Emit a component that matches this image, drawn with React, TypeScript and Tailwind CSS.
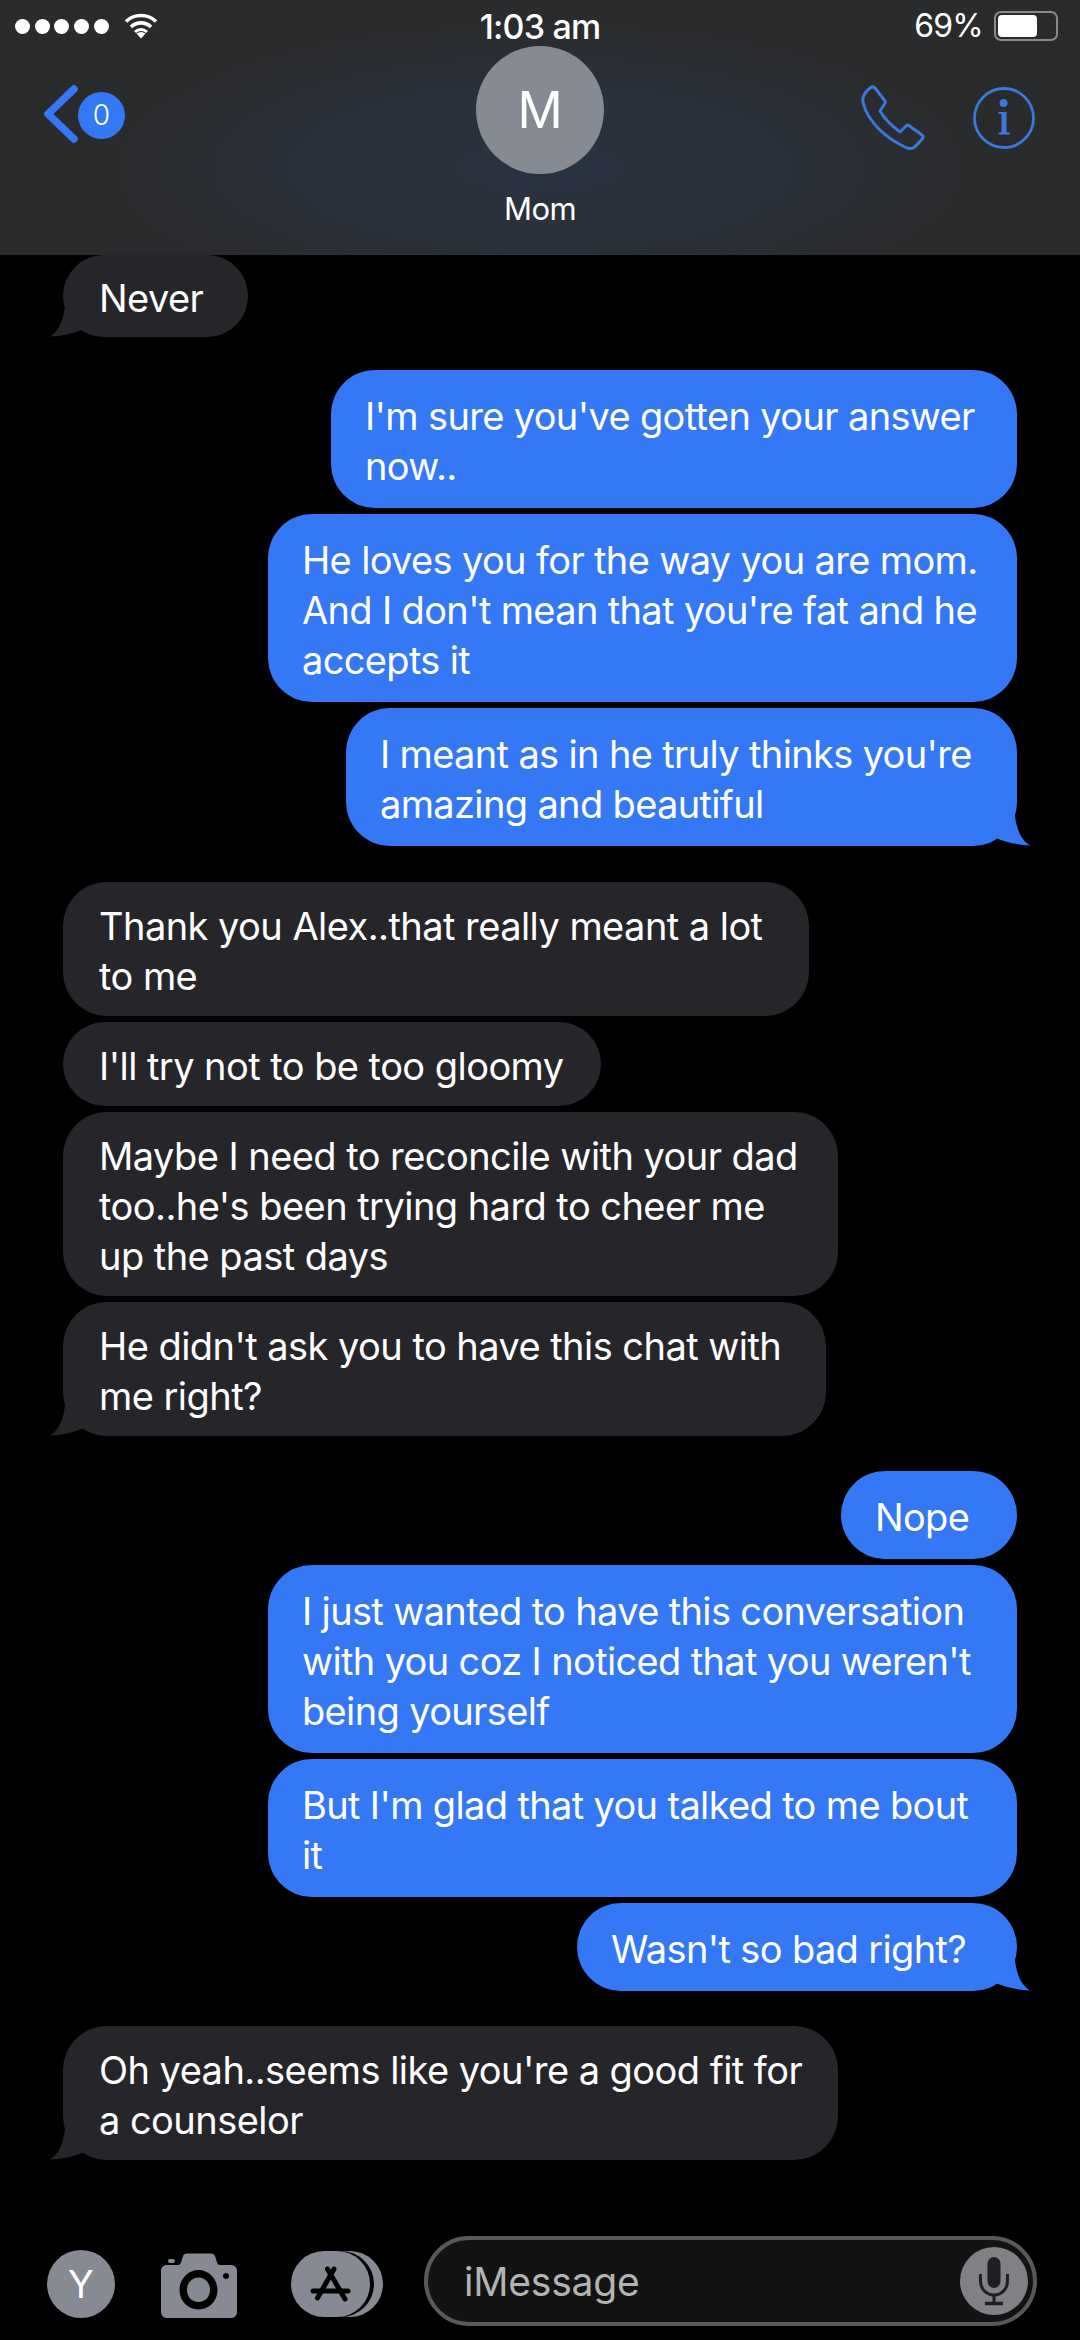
const sans = "font-['Inter','Liberation_Sans',sans-serif]";

type BubbleProps = {
  lines: string[];
  mine?: boolean;
  tail?: boolean;
  className: string;
};

const Tail = ({ mine }: { mine?: boolean }) => (
  <svg
    viewBox="0 0 60 50"
    className={`absolute bottom-0 h-[50px] w-[60px] ${mine ? "right-[-15px]" : "left-[-15px] -scale-x-100"}`}
    fill={mine ? "#3478f6" : "#26252a"}
  >
    <path d="M42 0C42 20 44 41 58 49.5C45 49 32 46 22 41C15 46 8 48 0 50L0 0Z" />
  </svg>
);

const Bubble = ({ lines, mine, tail, className }: BubbleProps) => (
  <div
    className={`relative rounded-[44px] text-[38px] leading-[50px] text-white ${
      mine
        ? "self-end bg-[#3478f6] px-[34px] pb-[17px] pt-[21px] tracking-[-0.65px]"
        : "self-start bg-[#26252a] px-[36px] pb-[15px] pt-[19px] tracking-[-0.55px]"
    } ${className}`}
  >
    {lines.map((l) => (
      <div key={l} className="relative z-10 whitespace-nowrap">
        {l}
      </div>
    ))}
    {tail && <Tail mine={mine} />}
  </div>
);

const StatusBar = () => (
  <div className="flex h-[46px] items-center justify-between pl-[15px] pr-[22px] pt-[6px] text-[32px] tracking-[-0.8px] text-white">
    <div className="flex w-[307px] items-center gap-[15px]">
      <div className="flex gap-[4.7px]">
        {[0, 1, 2, 3, 4].map((d) => (
          <div key={d} className="h-[15px] w-[15px] rounded-full bg-white" />
        ))}
      </div>
      <svg viewBox="0 0 34 26" className="h-[26px] w-[34px]" fill="none" stroke="#fff" strokeWidth="3.6">
        <path d="M2 8.5C10 0.5 24 0.5 32 8.5" />
        <path d="M7 14C12.5 8.5 21.5 8.5 27 14" />
        <path d="M11 19C14.5 15.5 19.5 15.5 23 19" strokeWidth="3" />
        <path d="M12.5 20.5L17 25.5L21.5 20.5C18.5 18.5 15.5 18.5 12.5 20.5Z" fill="#fff" stroke="none" />
      </svg>
    </div>
    <div className="text-[34px] font-medium">1:03 am</div>
    <div className="flex w-[300px] items-center justify-end gap-[11px]">
      <span>69%</span>
      <div className="flex h-[30px] w-[64px] items-stretch rounded-[7px] border-[2px] border-[#8a8a8a] p-[2px]">
        <div className="w-[39px] rounded-[4px] bg-white" />
      </div>
    </div>
  </div>
);

const NavBar = () => (
  <div className="relative flex flex-col items-center">
    <div className="flex h-[128px] w-[128px] items-center justify-center rounded-full bg-[#858a93] text-[50px] text-white">
      M
    </div>
    <div className="mt-[15px] text-[31px] leading-[40px] tracking-[-0.5px] text-white">Mom</div>
    <div className="absolute left-[43px] top-[39px] flex items-center">
      <svg viewBox="0 0 36 58" className="h-[58px] w-[36px]" fill="none" stroke="#3478f6" strokeWidth="7.5" strokeLinecap="round" strokeLinejoin="round">
        <path d="M31 4L5 29L31 54" />
      </svg>
      <div className="ml-[-1px] mt-[2px] flex h-[47px] w-[47px] items-center justify-center rounded-full bg-[#3478f6] text-[28px] font-light text-white">
        0
      </div>
    </div>
    <div className="absolute right-[45px] top-[39px] flex items-start gap-[48px]">
      <svg viewBox="0 0 64 66" className="h-[66px] w-[64px]" fill="none" stroke="#3a78dc" strokeWidth="3" strokeLinejoin="round">
        <path d="M9 3C11 1.5 13 2 14 3L24 16C24.5 17 24.5 18 23.5 19L19 26C23 33 31 41 39 47L45 41C46 40 47.5 40 48.5 41L61 50C62 51 62.5 52 61.5 53.5C58 58 55 61 52 63C50 64 48 63.5 46 63C35 58 26 52 18 44C11 37 5 29 2.5 19C1.5 16 2 12 3 10C4.5 7 7 5 9 3Z" />
      </svg>
      <svg viewBox="0 0 62 62" className="mt-[2px] h-[62px] w-[62px]" fill="#3a78dc">
        <circle cx="31" cy="31" r="29.5" fill="none" stroke="#3a78dc" strokeWidth="2.8" />
        <circle cx="30.5" cy="16" r="4" />
        <path d="M25.5 25H33.5V45.5H37V47.5H25.5V45.5H28.5V27H25.5Z" />
      </svg>
    </div>
  </div>
);

const ComposeBar = () => (
  <div className="flex h-[90px] items-center pl-[47px] pr-[43px]">
    <div className="mt-[6px] flex h-[68px] w-[68px] items-center justify-center rounded-full bg-[#858a93] text-[38px] text-white">
      Y
    </div>
    <svg viewBox="0 0 76 66" className="ml-[46px] mt-[8px] h-[66px] w-[76px]">
      <path
        fill="#858a93"
        fillRule="evenodd"
        d="M6 13H17C18.5 13 19.5 12 20 10.5L22 4C22.5 2.5 24 1.5 26 1.5H50C52 1.5 53.5 2.5 54 4L56 10.5C56.5 12 57.5 13 59 13H70C73.5 13 76 15.5 76 19V60C76 63.5 73.5 66 70 66H6C2.5 66 0 63.5 0 60V19C0 15.5 2.5 13 6 13ZM37.5 18C27 18 18.5 27 18.5 38C18.5 49 27 57.5 37.5 57.5C48 57.5 56.5 49 56.5 38C56.5 27 48 18 37.5 18ZM37.5 25.5C44 25.5 49 31 49 38C49 45 44 50 37.5 50C31 50 26 45 26 38C26 31 31 25.5 37.5 25.5ZM65 21C63.3 21 62 22.3 62 24C62 25.7 63.3 27 65 27C66.7 27 68 25.7 68 24C68 22.3 66.7 21 65 21Z"
      />
      <rect x="7" y="7" width="7" height="4" rx="2" fill="#858a93" />
    </svg>
    <svg viewBox="0 0 92 68" className="ml-[54px] mt-[6px] h-[68px] w-[92px]">
      <rect x="12" y="1" width="80" height="66" rx="33" fill="#858a93" />
      <rect x="0" y="1" width="83" height="66" rx="33" fill="#000" />
      <rect x="0" y="1" width="79" height="66" rx="33" fill="#858a93" />
      <g stroke="#000" strokeWidth="5" strokeLinecap="round" fill="none">
        <path d="M43 19L26.5 48" />
        <path d="M36.5 19L54 49" />
        <path d="M22 41H57" />
      </g>
    </svg>
    <div className="ml-[41px] flex h-[90px] flex-1 items-center justify-between rounded-full border-[4px] border-[#595959] bg-[#131313] pl-[36px] pr-[5px]">
      <span className="pt-[3px] text-[39px] tracking-[-0.2px] text-[#b3b3b3]">iMessage</span>
      <div className="flex h-[68px] w-[68px] items-center justify-center rounded-full bg-[#808085]">
        <svg viewBox="0 0 32 50" className="h-[50px] w-[32px]" fill="none" stroke="#1f1f22" strokeWidth="3">
          <rect x="9.5" y="1" width="13" height="31" rx="6.5" fill="#1f1f22" stroke="none" />
          <path d="M2.5 18V25C2.5 33 8.5 39 16 39C23.5 39 29.5 33 29.5 25V18" />
          <path d="M16 39V46" />
          <path d="M7 47.5H25" strokeWidth="3.5" />
        </svg>
      </div>
    </div>
  </div>
);

const App = () => (
  <div className={`flex h-[2340px] w-[1080px] flex-col overflow-hidden bg-black ${sans}`}>
    <div className="h-[255px] bg-[#2a2b2d] bg-[radial-gradient(ellipse_420px_140px_at_50%_65%,#293340_0%,#2a3039_60%,#2a2b2d_100%)]">
      <StatusBar />
      <NavBar />
    </div>
    <div className="flex flex-1 flex-col px-[63px]">
      <Bubble lines={["Never"]} tail className="w-[185px] !pb-[14px] !pt-[18px]" />
      <Bubble mine lines={["I'm sure you've gotten your answer", "now.."]} className="mt-[33px] w-[686px]" />
      <Bubble mine lines={["He loves you for the way you are mom.", "And I don't mean that you're fat and he", "accepts it"]} className="mt-[6px] w-[749px]" />
      <Bubble mine tail lines={["I meant as in he truly thinks you're", "amazing and beautiful"]} className="mt-[6px] w-[671px]" />
      <Bubble lines={["Thank you Alex..that really meant a lot", "to me"]} className="mt-[36px] w-[746px]" />
      <Bubble lines={["I'll try not to be too gloomy"]} className="mt-[6px] w-[538px]" />
      <Bubble lines={["Maybe I need to reconcile with your dad", "too..he's been trying hard to cheer me", "up the past days"]} className="mt-[6px] w-[775px]" />
      <Bubble tail lines={["He didn't ask you to have this chat with", "me right?"]} className="mt-[6px] w-[763px]" />
      <Bubble mine lines={["Nope"]} className="mt-[35px] w-[176px]" />
      <Bubble mine lines={["I just wanted to have this conversation", "with you coz I noticed that you weren't", "being yourself"]} className="mt-[6px] w-[749px]" />
      <Bubble mine lines={["But I'm glad that you talked to me bout", "it"]} className="mt-[6px] w-[749px]" />
      <Bubble mine tail lines={["Wasn't so bad right?"]} className="mt-[6px] w-[440px]" />
      <Bubble tail lines={["Oh yeah..seems like you're a good fit for", "a counselor"]} className="mt-[35px] w-[775px]" />
    </div>
    <div className="pb-[14px]">
      <ComposeBar />
    </div>
  </div>
);

export default App;
